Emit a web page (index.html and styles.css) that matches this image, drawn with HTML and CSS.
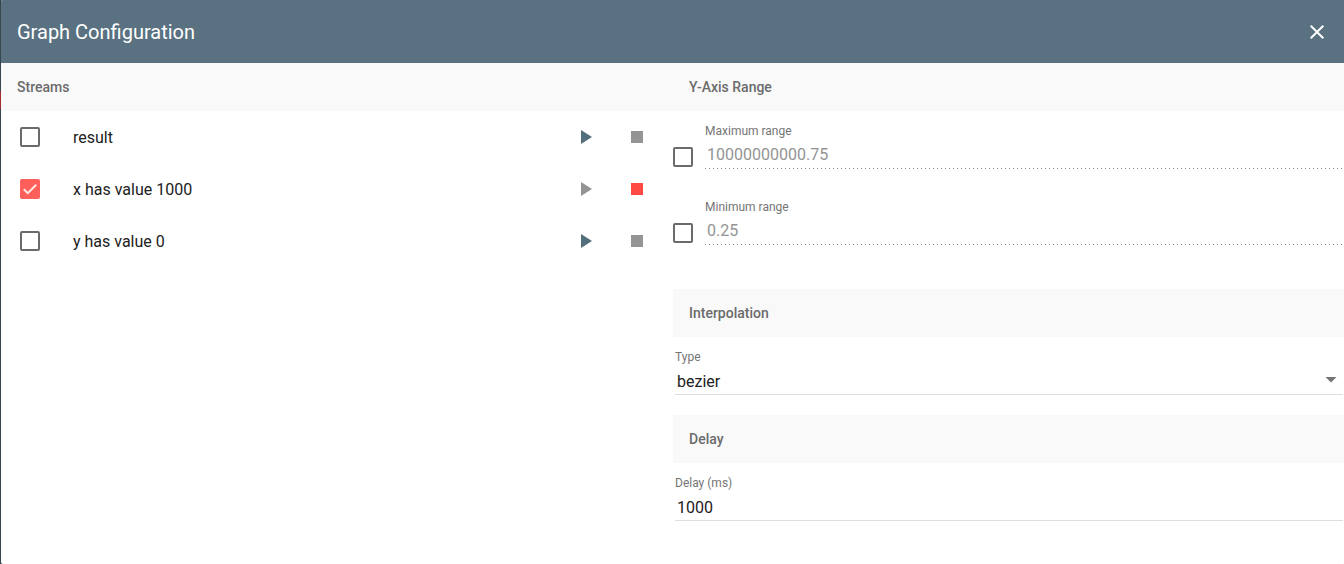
FILE: index.html
```html
<!DOCTYPE html>
<html lang="en">
<head>
<meta charset="utf-8">
<title>Graph Configuration</title>
<link rel="stylesheet" href="styles.css">
</head>
<body>
<main class="dialog">
  <header class="toolbar">
    <h1 class="toolbar-title">Graph Configuration</h1>
    <button class="icon-button" type="button" aria-label="Close">
      <svg class="icon" viewBox="0 0 24 24"><path d="M19 6.41L17.59 5 12 10.59 6.41 5 5 6.41 10.59 12 5 17.59 6.41 19 12 13.41 17.59 19 19 17.59 13.41 12z"/></svg>
    </button>
  </header>
  <div class="columns">
    <section>
      <h2 class="subheader">Streams</h2>
      <ul class="streams">
        <li class="stream">
          <span class="check"><input class="check-input" type="checkbox" id="s1"></span>
          <label class="stream-name" for="s1">result</label>
          <button class="icon-button play" type="button" aria-label="Start result"><svg class="icon" viewBox="0 0 24 24"><path d="M8 5v14l11-7z"/></svg></button>
          <button class="icon-button stop" type="button" aria-label="Stop result" disabled><svg class="icon" viewBox="0 0 24 24"><path d="M6 6h12v12H6z"/></svg></button>
        </li>
        <li class="stream">
          <span class="check"><input class="check-input" type="checkbox" id="s2" checked><svg class="check-mark" viewBox="0 0 20 20"><path d="M3.800 10.200L7.800 14.200L16.200 5.800"/></svg></span>
          <label class="stream-name" for="s2">x has value 1000</label>
          <button class="icon-button play" type="button" aria-label="Start x" disabled><svg class="icon" viewBox="0 0 24 24"><path d="M8 5v14l11-7z"/></svg></button>
          <button class="icon-button stop" type="button" aria-label="Stop x"><svg class="icon" viewBox="0 0 24 24"><path d="M6 6h12v12H6z"/></svg></button>
        </li>
        <li class="stream">
          <span class="check"><input class="check-input" type="checkbox" id="s3"></span>
          <label class="stream-name" for="s3">y has value 0</label>
          <button class="icon-button play" type="button" aria-label="Start y"><svg class="icon" viewBox="0 0 24 24"><path d="M8 5v14l11-7z"/></svg></button>
          <button class="icon-button stop" type="button" aria-label="Stop y" disabled><svg class="icon" viewBox="0 0 24 24"><path d="M6 6h12v12H6z"/></svg></button>
        </li>
      </ul>
    </section>
    <section>
      <h2 class="subheader">Y-Axis Range</h2>
      <div class="ranges">
        <div class="range">
          <span class="check"><input class="check-input" type="checkbox" aria-label="Set maximum range"></span>
          <div class="field">
            <label class="field-label" for="max">Maximum range</label>
            <input class="field-input" id="max" type="text" value="10000000000.75" disabled>
          </div>
        </div>
        <div class="range">
          <span class="check"><input class="check-input" type="checkbox" aria-label="Set minimum range"></span>
          <div class="field">
            <label class="field-label" for="min">Minimum range</label>
            <input class="field-input" id="min" type="text" value="0.25" disabled>
          </div>
        </div>
      </div>
      <h2 class="subheader">Interpolation</h2>
      <div class="setting">
        <div class="field">
          <label class="field-label" for="type">Type</label>
          <div class="select-wrap">
            <select class="field-input" id="type"><option>bezier</option></select>
            <svg class="select-arrow" viewBox="0 0 12 6"><path d="M0.500 0h11L6 5.500z"/></svg>
          </div>
        </div>
      </div>
      <h2 class="subheader">Delay</h2>
      <div class="setting">
        <div class="field">
          <label class="field-label" for="delay">Delay (ms)</label>
          <input class="field-input" id="delay" type="text" value="1000">
        </div>
      </div>
    </section>
  </div>
</main>
</body>
</html>
```
FILE: styles.css
```css
* {
  box-sizing: border-box;
}

body {
  margin: 0;
  padding-left: 1px;
  overflow: hidden auto;
  font-family: Roboto, "Liberation Sans", sans-serif;
  color: #212121;
  background: linear-gradient(#37474f 91px, #a02c2c 91px, #a02c2c 109px, #37474f 109px);
}

.dialog {
  min-height: 100vh;
  margin-right: -1px;
  background: #fff;
  border-radius: 2px;
  overflow: hidden;
}

.toolbar {
  display: flex;
  align-items: center;
  justify-content: space-between;
  padding: 20px 16px 19px;
  background: #597180;
  color: #fff;
}

.toolbar-title {
  margin: 0;
  font-size: 20px;
  line-height: 24px;
  font-weight: 400;
}

.icon-button {
  display: block;
  padding: 0;
  border: 0;
  background: none;
  color: inherit;
}

.icon {
  display: block;
  width: 24px;
  height: 24px;
  fill: currentColor;
}

.columns {
  display: grid;
  grid-template-columns: 1fr 1fr;
}

.subheader {
  margin: 0;
  padding: 16px;
  font-size: 14px;
  line-height: 16px;
  font-weight: 500;
  color: #6b6b6b;
  background: #f9f9f9;
}

.streams {
  margin: 0;
  padding: 0;
  list-style: none;
}

.stream {
  display: flex;
  align-items: center;
  height: 52px;
  gap: 28px;
  padding: 0 24px 0 19px;
}

.stream-name {
  flex: 1;
  margin-left: 5px;
  padding-top: 2px;
  font-size: 16px;
  line-height: 24px;
}

.play {
  color: #546e7d;
}

.stop {
  color: #ff4a43;
}

.play:disabled,
.stop:disabled {
  color: #949494;
}

.check {
  display: grid;
  flex: none;
  width: 20px;
  height: 20px;
}

.check-input {
  grid-area: 1 / 1;
  appearance: none;
  width: 20px;
  height: 20px;
  margin: 0;
  border: 2px solid #6b6b6b;
  border-radius: 2px;
}

.check-input:checked {
  border-color: #ff5f5b;
  background: #ff5f5b;
}

.check-mark {
  grid-area: 1 / 1;
  width: 20px;
  height: 20px;
  fill: none;
  stroke: #ffe9e6;
  stroke-width: 2;
  pointer-events: none;
}

.ranges {
  display: grid;
  gap: 30px;
  padding: 12px 2px 44px 0;
}

.range {
  display: flex;
  align-items: flex-end;
  gap: 12px;
}

.range .check {
  margin-bottom: 2px;
}

.setting {
  padding: 12px 2px 20px;
}

.field {
  flex: 1;
  display: grid;
  gap: 4px;
}

.field-label {
  font-size: 12px;
  line-height: 16px;
  color: #757575;
}

.field-input {
  display: block;
  appearance: none;
  width: 100%;
  height: 26px;
  padding: 0 2px;
  border: 0;
  border-bottom: 1px solid #dedede;
  border-radius: 0;
  background: none;
  font: inherit;
  font-size: 16px;
  color: #212121;
}

.field-input:disabled {
  border-bottom: 0;
  padding-bottom: 3px;
  color: #949494;
  background: linear-gradient(to right, #8c8c8c 1px, transparent 1px) left bottom / 4px 1px repeat-x;
}

.select-wrap {
  position: relative;
}

.select-arrow {
  position: absolute;
  top: 8px;
  right: 6px;
  width: 12px;
  height: 6px;
  fill: #757575;
  pointer-events: none;
}
```
